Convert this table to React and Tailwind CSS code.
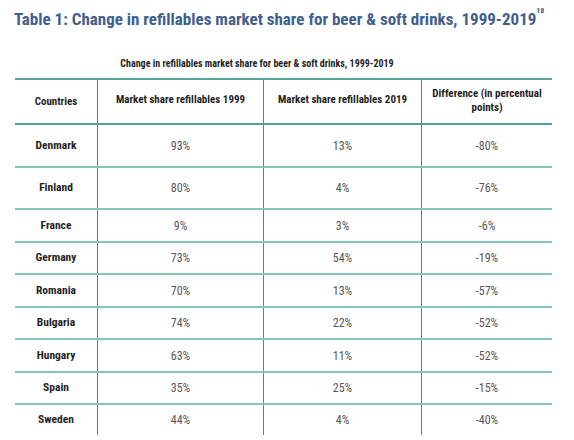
import React from "react";

const rows = [
  ["Denmark", "93%", "13%", "-80%", "h-[43px]"],
  ["Finland", "80%", "4%", "-76%", "h-[42px]"],
  ["France", "9%", "3%", "-6%", "h-[33px]"],
  ["Germany", "73%", "54%", "-19%", "h-[32px]"],
  ["Romania", "70%", "13%", "-57%", "h-[33px]"],
  ["Bulgaria", "74%", "22%", "-52%", "h-[32px]"],
  ["Hungary", "63%", "11%", "-52%", "h-[33px]"],
  ["Spain", "35%", "25%", "-15%", "h-[32px]"],
  ["Sweden", "44%", "4%", "-40%", "h-[30px]"],
];

const App = () => {
  return (
    <div
      className="w-[574px] h-[440px] bg-white overflow-hidden font-stretch-condensed"
      style={{ fontFamily: "Roboto, 'Liberation Sans', sans-serif" }}
    >
      <h1 className="pl-[14px] pt-[7px] h-[31px] text-[17px] leading-[24px] font-bold text-[#41608e] whitespace-nowrap">
        Table 1: Change in refillables market share for beer &amp; soft drinks, 1999-2019
        <sup className="text-[8px] font-bold align-top relative top-[4px]">18</sup>
      </h1>

      <p className="mt-[26px] w-[514px] text-center text-[10px] font-bold text-[#1f1f1f] leading-[14px]">
        Change in refillables market share for beer &amp; soft drinks, 1999-2019
      </p>

      <div className="ml-[15px] mt-[7px] w-[537px] border-t-2 border-[#5aa89e]">
        <div className="flex h-[45px] border-b-2 border-[#52a198] text-[11px] font-bold text-[#1f1f1f] leading-[14px]">
          <div className="w-[82px] flex items-center justify-center">Countries</div>
          <div className="w-[166px] border-l border-[#3a9288] flex items-center justify-center pb-[4px]">
            Market share refillables 1999
          </div>
          <div className="w-[158px] border-l border-[#3a9288] flex items-center justify-center pb-[4px]">
            Market share refillables 2019
          </div>
          <div className="flex-1 border-l border-[#3a9288] flex items-center justify-center text-center pb-[2px]">
            Difference (in percentual
            <br />
            points)
          </div>
        </div>

        {rows.map((r, i) => (
          <div
            key={r[0]}
            className={`flex ${r[4]} ${i < rows.length - 1 ? "border-b-2 border-[#86c5bb]" : ""}`}
          >
            <div className="w-[82px] flex items-center justify-center text-[11.5px] font-bold text-[#1f1f1f]">
              {r[0]}
            </div>
            <div className="w-[166px] border-l border-[#3a9288] flex items-center justify-center text-[12px] text-[#575757]">
              {r[1]}
            </div>
            <div className="w-[158px] border-l border-[#3a9288] flex items-center justify-center text-[12px] text-[#575757]">
              {r[2]}
            </div>
            <div className="flex-1 border-l border-[#3a9288] flex items-center justify-center text-[12px] text-[#575757]">
              {r[3]}
            </div>
          </div>
        ))}
      </div>
    </div>
  );
};

export default App;
